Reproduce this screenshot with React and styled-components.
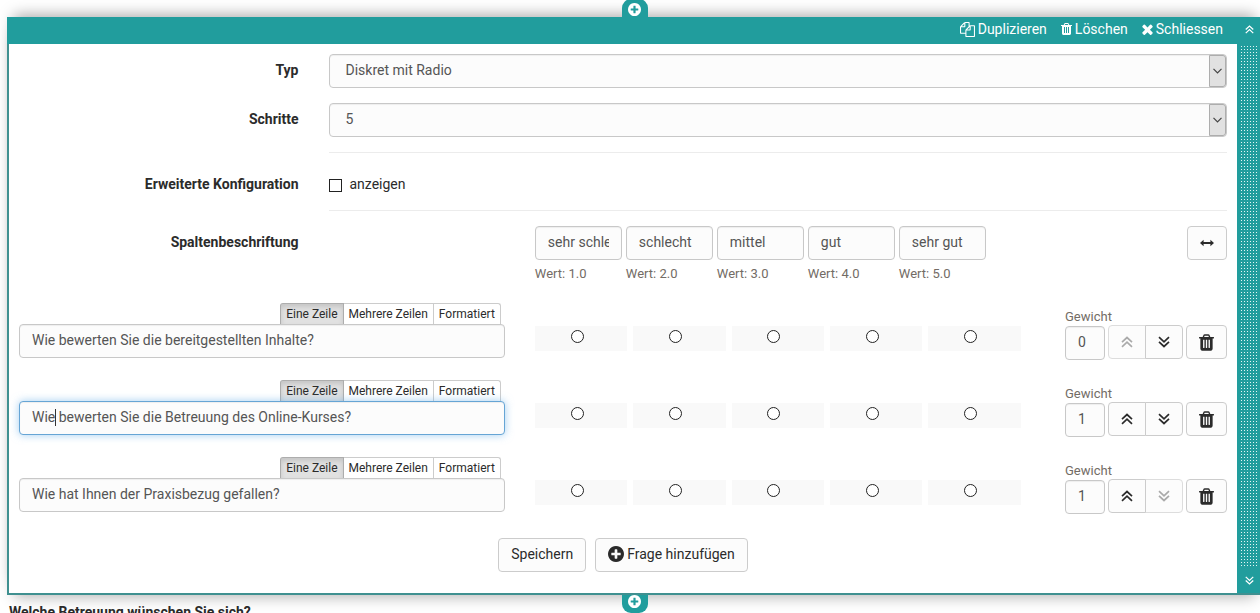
import { useState } from 'react';
import styled, { createGlobalStyle, css } from 'styled-components';

const GlobalStyle = createGlobalStyle`
  * {
    box-sizing: border-box;
  }
  body {
    margin: 0;
    background: #fff;
    color: #2b2b2b;
    font-family: Roboto, 'Liberation Sans', sans-serif;
    font-size: 14px;
    line-height: 20px;
  }
  button, input, select {
    margin: 0;
    font: inherit;
  }
`;

const teal = '#219d9d';

const Page = styled.main`
  height: 100vh;
  overflow: hidden;
  padding-top: 17px;
`;

const Editor = styled.section`
  position: relative;
  margin: 0 -2px 0 7px;
  background: #fff;
  border-left: 2px solid #3f9090;
  border-bottom: 2px solid #3f9090;
  box-shadow: 0 -9px 14px -7px rgba(0, 0, 0, 0.35), 0 9px 14px -7px rgba(0, 0, 0, 0.3);
`;

const AddTab = styled.button`
  position: absolute;
  left: 50%;
  width: 26px;
  height: 18px;
  margin-left: -14px;
  padding: 0;
  border: 0;
  background: ${teal};
  color: #fff;
  display: flex;
  justify-content: center;
  align-items: flex-start;
  cursor: pointer;
  ${({ $bottom }) => $bottom ? css`
    top: 100%;
    margin-top: 2px;
    border-radius: 0 0 9px 9px;
  ` : css`
    bottom: 100%;
    padding-top: 4px;
    border-radius: 9px 9px 0 0;
  `}
`;

const Header = styled.header`
  display: flex;
  justify-content: flex-end;
  height: 27px;
  margin-left: -2px;
  background: ${teal};
`;

const HeaderLinks = styled.nav`
  display: flex;
  align-items: center;
  gap: 14px;
  margin-right: 14px;
  padding-bottom: 3px;
`;

const HeaderLink = styled.a`
  display: flex;
  align-items: center;
  gap: 3px;
  color: #fff;
  text-decoration: none;
`;

const MoveButton = styled.button`
  display: flex;
  align-items: center;
  justify-content: center;
  width: 25px;
  height: 25px;
  padding: 0;
  border: 0;
  background: ${teal};
  color: #fff;
  cursor: pointer;
`;

const Body = styled.div`
  display: flex;
`;

const Form = styled.form`
  flex: 1;
  min-width: 0;
  padding: 10px 10px 21px;
`;

const SideBar = styled.aside`
  display: flex;
  flex-direction: column;
  width: 25px;
  background: ${teal};
`;

const Grip = styled.div`
  flex: 1;
  margin: 2px 5px 0 4px;
  background-color: #e4f6f6;
  background-image:
    linear-gradient(to right, transparent 1px, ${teal} 1px),
    linear-gradient(to bottom, transparent 1px, ${teal} 1px);
  background-size: 3px 3px;
  cursor: move;
`;

const Row = styled.div`
  display: flex;
  margin: 0 -15px ${({ $space }) => $space || 15}px;
`;

const Col = styled.div`
  width: calc(100% * ${({ $span }) => $span} / 12);
  padding: 0 15px;
`;

const labelText = css`
  padding-top: 6px;
  font-weight: 700;
  text-align: right;
`;

const Label = styled.label`
  display: block;
  ${labelText}
`;

const GroupLabel = styled.div`
  ${labelText}
`;

const Divider = styled.hr`
  height: 1px;
  margin: 0;
  border: 0;
  background: #ececec;
`;

const control = css`
  display: block;
  width: 100%;
  height: 34px;
  border: 1px solid #c8c8c8;
  border-radius: 4px;
  background: #fcfcfc;
  box-shadow: inset 0 1px 1px rgba(0, 0, 0, 0.06);
  color: #555;
  outline: none;
`;

const SelectBox = styled.div`
  position: relative;
`;

const Select = styled.select`
  ${control}
  padding: 0 32px 2px 16px;
  appearance: none;
`;

const SelectArrow = styled.span`
  position: absolute;
  top: 1px;
  right: 1px;
  bottom: 1px;
  display: flex;
  align-items: center;
  justify-content: center;
  width: 17px;
  border: 1px solid #adadad;
  border-radius: 0 3px 3px 0;
  background: #e1e1e1;
  color: #444;
  pointer-events: none;
`;

const CheckLabel = styled.label`
  display: flex;
  align-items: center;
  gap: 8px;
  padding: 6px 0 1px;
`;

const Tick = styled.input`
  width: 13px;
  height: 13px;
  appearance: none;
  border: 1px solid #222;
  background: #fff;
  &:checked {
    background: #222;
    box-shadow: inset 0 0 0 2px #fff;
  }
`;

const Checkbox = styled(Tick)`
  margin-top: 2px;
`;

const Radio = styled(Tick)`
  border-radius: 50%;
`;

const Input = styled.input`
  ${control}
  padding: 0 12px 2px;
  ${({ $active }) => $active && css`
    border-color: #66a5d5;
    box-shadow: inset 0 1px 1px rgba(0, 0, 0, 0.06), 0 0 8px rgba(102, 175, 233, 0.6);
  `}
`;

const Captions = styled.div`
  display: flex;
  gap: 4px;
`;

const Caption = styled.label`
  width: 87px;
`;

const Help = styled.span`
  display: block;
  font-size: 13px;
  line-height: 18px;
  color: #736c65;
`;

const CaptionHelp = styled(Help)`
  margin-top: 5px;
`;

const Button = styled.button`
  display: inline-flex;
  align-items: center;
  justify-content: center;
  gap: 3px;
  height: 34px;
  padding: 0 12px 2px;
  border: 1px solid #ccc;
  border-radius: 4px;
  background: #fcfcfc;
  color: #2b2b2b;
  cursor: pointer;
`;

const IconButton = styled(Button)`
  width: ${({ $wide }) => $wide ? 41 : 40}px;
  padding: 0;
`;

const End = styled.div`
  display: flex;
  justify-content: flex-end;
`;

const Toggles = styled.div`
  display: flex;
  justify-content: flex-end;
  padding-right: 4px;
`;

const Toggle = styled.button`
  height: 21px;
  padding: 0 5px;
  border: 1px solid #ccc;
  border-bottom: 0;
  background: #fff;
  color: #2b2b2b;
  font-size: 12px;
  line-height: 20px;
  cursor: pointer;
  & + & {
    margin-left: -1px;
  }
  &:first-child {
    border-radius: 3px 0 0 0;
  }
  &:last-child {
    border-radius: 0 3px 0 0;
  }
  ${({ $on }) => $on && css`
    position: relative;
    border-color: #adadad;
    background: #e1e1e1;
    box-shadow: inset 0 3px 5px rgba(0, 0, 0, 0.125);
  `}
`;

const TextBox = styled.div`
  position: relative;
`;

const Caret = styled.span`
  position: absolute;
  top: 8px;
  left: 36px;
  width: 1px;
  height: 17px;
  background: #333;
`;

const Choices = styled.div`
  display: grid;
  grid-template-columns: repeat(5, 1fr);
  gap: 6px;
  margin-top: 23px;
`;

const Choice = styled.div`
  display: flex;
  justify-content: center;
  height: 25px;
  padding: 4px 8px 0 0;
  background: #f9f9f9;
`;

const Weight = styled.div`
  display: flex;
  justify-content: flex-end;
  align-items: flex-end;
  gap: 3px;
  height: 57px;
`;

const WeightField = styled.label`
  width: 40px;
  white-space: nowrap;
`;

const ButtonGroup = styled.div`
  display: flex;
  margin-bottom: 1px;
`;

const StepButton = styled(Button)`
  width: 38px;
  padding: 0;
  &:first-child {
    border-radius: 4px 0 0 4px;
  }
  &:last-child {
    margin-left: -1px;
    border-radius: 0 4px 4px 0;
  }
  &:disabled {
    border-color: #ddd;
    color: #aaa;
    cursor: default;
  }
  &:enabled {
    position: relative;
  }
`;

const Actions = styled.div`
  display: flex;
  justify-content: center;
  gap: 9px;
  padding-top: 4px;
`;

const NextQuestion = styled.p`
  margin: 7px 9px;
  font-weight: 700;
`;

const PlusCircle = ({ size }) => (
  <svg width={size} height={size} viewBox="128 128 1536 1536" fill="currentColor" aria-hidden="true">
    <path d="M1344 960v-128q0-26-19-45t-45-19h-256v-256q0-26-19-45t-45-19h-128q-26 0-45 19t-19 45v256h-256q-26 0-45 19t-19 45v128q0 26 19 45t45 19h256v256q0 26 19 45t45 19h128q26 0 45-19t19-45v-256h256q26 0 45-19t19-45zm320-64q0 209-103 385.500t-279.500 279.500-385.500 103-385.500-103-279.500-279.500-103-385.500 103-385.500 279.500-279.500 385.500-103 385.500 103 279.500 279.500 103 385.500z" />
  </svg>
);

const Files = () => (
  <svg width="15" height="15" viewBox="0 0 1792 1792" fill="currentColor" aria-hidden="true">
    <path d="M1696 384q40 0 68 28t28 68v1216q0 40-28 68t-68 28h-960q-40 0-68-28t-28-68v-288h-544q-40 0-68-28t-28-68v-672q0-40 20-88t48-76l408-408q28-28 76-48t88-20h416q40 0 68 28t28 68v328q68-40 128-40h416zm-544 213l-299 299h299v-299zm-640-384l-299 299h299v-299zm196 647l316-316v-416h-384v416q0 40-28 68t-68 28h-416v640h512v-256q0-40 20-88t48-76zm956 804v-1152h-384v416q0 40-28 68t-68 28h-416v640h896z" />
  </svg>
);

const Trash = ({ width, height }) => (
  <svg width={width} height={height} viewBox="192 128 1408 1536" fill="currentColor" aria-hidden="true">
    <path d="M704 1376v-704q0-14-9-23t-23-9h-64q-14 0-23 9t-9 23v704q0 14 9 23t23 9h64q14 0 23-9t9-23zm256 0v-704q0-14-9-23t-23-9h-64q-14 0-23 9t-9 23v704q0 14 9 23t23 9h64q14 0 23-9t9-23zm256 0v-704q0-14-9-23t-23-9h-64q-14 0-23 9t-9 23v704q0 14 9 23t23 9h64q14 0 23-9t9-23zm-544-992h448l-48-117q-7-9-17-11h-317q-10 2-17 11zm928 32v64q0 14-9 23t-23 9h-96v948q0 83-47 143.500t-113 60.500h-832q-66 0-113-58.500t-47-141.500v-952h-96q-14 0-23-9t-9-23v-64q0-14 9-23t23-9h309l70-167q15-37 54-63t79-26h320q40 0 79 26t54 63l70 167h309q14 0 23 9t9 23z" />
  </svg>
);

const Times = () => (
  <svg width="11" height="11" viewBox="302 302 1188 1252" fill="currentColor" aria-hidden="true">
    <path d="M1490 1322q0 40-28 68l-136 136q-28 28-68 28t-68-28l-294-294-294 294q-28 28-68 28t-68-28l-136-136q-28-28-28-68t28-68l294-294-294-294q-28-28-28-68t28-68l136-136q28-28 68-28t68 28l294 294 294-294q28-28 68-28t68 28l136 136q28 28 28 68t-28 68l-294 294 294 294q28 28 28 68z" />
  </svg>
);

const DoubleAngle = ({ down, size = 12 }) => (
  <svg width={size} height={size} viewBox="0 0 12 12" fill="none" stroke="currentColor" strokeWidth="1.7" aria-hidden="true">
    <path d={down ? 'M1 1.2l5 4.6 5-4.6M1 5.9l5 4.6 5-4.6' : 'M1 6.1l5-4.6 5 4.6M1 10.8l5-4.6 5 4.6'} />
  </svg>
);

const ArrowsH = () => (
  <svg width="14" height="8" viewBox="0 0 14 8" fill="currentColor" aria-hidden="true">
    <path d="M0 4l3.600-3.200v2.200h6.800v-2.200l3.600 3.200-3.600 3.200v-2.200h-6.800v2.200z" />
  </svg>
);

const Chevron = () => (
  <svg width="9" height="6" viewBox="0 0 9 6" fill="none" stroke="currentColor" strokeWidth="1.2" aria-hidden="true">
    <path d="M0.500 0.800l4 4 4-4" />
  </svg>
);

const captions = ['sehr schlecht', 'schlecht', 'mittel', 'gut', 'sehr gut'];
const modes = ['Eine Zeile', 'Mehrere Zeilen', 'Formatiert'];
const startQuestions = [
  { id: 1, text: 'Wie bewerten Sie die bereitgestellten Inhalte?', weight: '0' },
  { id: 2, text: 'Wie bewerten Sie die Betreuung des Online-Kurses?', weight: '1' },
  { id: 3, text: 'Wie hat Ihnen der Praxisbezug gefallen?', weight: '1' },
];

const Question = ({ question, first, last, active, onMove, onDelete }) => {
  const [mode, setMode] = useState(modes[0]);

  return (
    <Row $space={20}>
      <Col $span={5}>
        <Toggles>
          {modes.map((item) => (
            <Toggle key={item} type="button" $on={item === mode} onClick={() => setMode(item)}>{item}</Toggle>
          ))}
        </Toggles>
        <TextBox>
          <Input type="text" aria-label="Frage" defaultValue={question.text} $active={active} />
          {active && <Caret />}
        </TextBox>
      </Col>
      <Col $span={5}>
        <Choices>
          {captions.map((caption) => (
            <Choice key={caption}>
              <Radio type="radio" name={`question-${question.id}`} aria-label={caption} />
            </Choice>
          ))}
        </Choices>
      </Col>
      <Col $span={2}>
        <Weight>
          <WeightField>
            <Help>Gewicht</Help>
            <Input type="text" defaultValue={question.weight} />
          </WeightField>
          <ButtonGroup>
            <StepButton type="button" aria-label="Nach oben" disabled={first} onClick={() => onMove(-1)}><DoubleAngle /></StepButton>
            <StepButton type="button" aria-label="Nach unten" disabled={last} onClick={() => onMove(1)}><DoubleAngle down /></StepButton>
          </ButtonGroup>
          <ButtonGroup>
            <IconButton type="button" $wide aria-label="Löschen" onClick={onDelete}><Trash width={15} height={17} /></IconButton>
          </ButtonGroup>
        </Weight>
      </Col>
    </Row>
  );
};

const App = () => {
  const [questions, setQuestions] = useState(startQuestions);

  const handleMove = (index, step) => {
    const next = [...questions];
    const [moved] = next.splice(index, 1);
    next.splice(index + step, 0, moved);
    setQuestions(next);
  };
  const handleDelete = (id) => {
    setQuestions(questions.filter((question) => question.id !== id));
  };
  const handleAdd = () => {
    setQuestions([...questions, { id: Date.now(), text: '', weight: '1' }]);
  };

  return (
    <>
      <GlobalStyle />
      <Page>
        <Editor>
          <AddTab type="button" aria-label="Element oberhalb einfügen"><PlusCircle size={13} /></AddTab>
          <Header>
            <HeaderLinks>
              <HeaderLink href="#duplizieren"><Files />Duplizieren</HeaderLink>
              <HeaderLink href="#loeschen"><Trash width={11} height={12} />Löschen</HeaderLink>
              <HeaderLink href="#schliessen"><Times />Schliessen</HeaderLink>
            </HeaderLinks>
            <MoveButton type="button" aria-label="Element nach oben"><DoubleAngle size={9} /></MoveButton>
          </Header>
          <Body>
            <Form onSubmit={(e) => e.preventDefault()}>
              <Row>
                <Col $span={3}><Label htmlFor="type">Typ</Label></Col>
                <Col $span={9}>
                  <SelectBox>
                    <Select id="type">
                      <option>Diskret mit Radio</option>
                    </Select>
                    <SelectArrow><Chevron /></SelectArrow>
                  </SelectBox>
                </Col>
              </Row>
              <Row>
                <Col $span={3}><Label htmlFor="steps">Schritte</Label></Col>
                <Col $span={9}>
                  <SelectBox>
                    <Select id="steps" defaultValue="5">
                      <option>5</option>
                    </Select>
                    <SelectArrow><Chevron /></SelectArrow>
                  </SelectBox>
                </Col>
              </Row>
              <Row>
                <Col $span={3} />
                <Col $span={9}><Divider /></Col>
              </Row>
              <Row>
                <Col $span={3}><GroupLabel>Erweiterte Konfiguration</GroupLabel></Col>
                <Col $span={9}>
                  <CheckLabel><Checkbox type="checkbox" />anzeigen</CheckLabel>
                </Col>
              </Row>
              <Row>
                <Col $span={3} />
                <Col $span={9}><Divider /></Col>
              </Row>
              <Row $space={20}>
                <Col $span={3}><GroupLabel>Spaltenbeschriftung</GroupLabel></Col>
                <Col $span={2} />
                <Col $span={5}>
                  <Captions>
                    {captions.map((caption, index) => (
                      <Caption key={caption}>
                        <Input type="text" defaultValue={caption} />
                        <CaptionHelp>Wert: {index + 1}.0</CaptionHelp>
                      </Caption>
                    ))}
                  </Captions>
                </Col>
                <Col $span={2}>
                  <End>
                    <IconButton type="button" aria-label="Spaltenbreite"><ArrowsH /></IconButton>
                  </End>
                </Col>
              </Row>
              {questions.map((question, index) => (
                <Question
                  key={question.id}
                  question={question}
                  first={index === 0}
                  last={index === questions.length - 1}
                  active={question.id === 2}
                  onMove={(step) => handleMove(index, step)}
                  onDelete={() => handleDelete(question.id)}
                />
              ))}
              <Actions>
                <Button type="submit">Speichern</Button>
                <Button type="button" onClick={handleAdd}><PlusCircle size={16} />Frage hinzufügen</Button>
              </Actions>
            </Form>
            <SideBar>
              <Grip />
              <MoveButton type="button" aria-label="Element nach unten"><DoubleAngle down size={9} /></MoveButton>
            </SideBar>
          </Body>
          <AddTab type="button" $bottom aria-label="Element unterhalb einfügen"><PlusCircle size={13} /></AddTab>
        </Editor>
        <NextQuestion>Welche Betreuung wünschen Sie sich?</NextQuestion>
      </Page>
    </>
  );
};

export default App;
